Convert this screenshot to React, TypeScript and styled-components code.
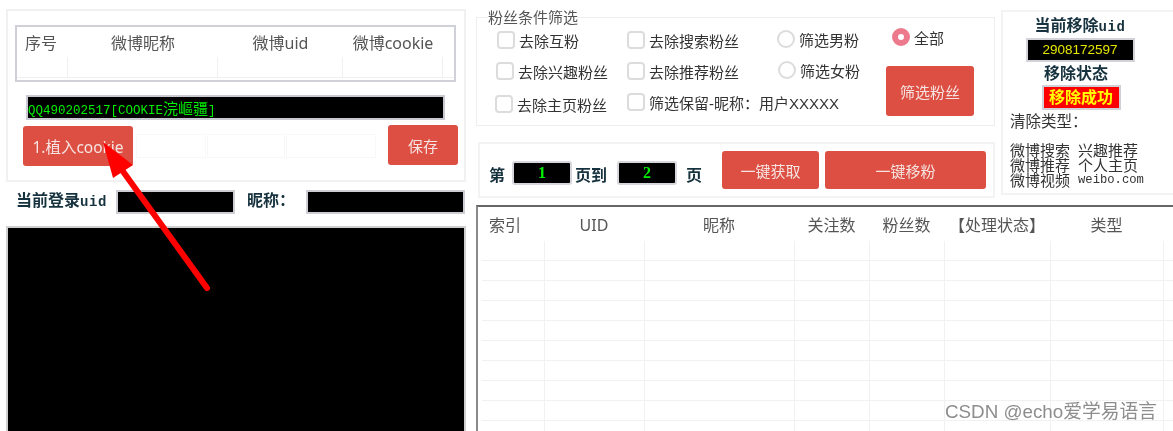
import React from "react";
import styled, { createGlobalStyle } from "styled-components";

const Global = createGlobalStyle`
  html, body { margin: 0; padding: 0; background: #fff; overflow: hidden; }
  * { box-sizing: border-box; }
`;

const SANS = `"Noto Sans", "Noto Sans CJK SC", sans-serif`;
const RED = "#dc4f42";

const Page = styled.div`
  position: relative;
  width: 1173px;
  height: 431px;
  overflow: hidden;
  display: flex;
  font-family: ${SANS};
  filter: blur(0.35px);
`;

const LeftCol = styled.div`
  width: 476px;
  padding: 9px 0 0 6px;
  display: flex;
  flex-direction: column;
`;

const RightCol = styled.div`
  width: 697px;
  display: flex;
  flex-direction: column;
`;

const CookiePanel = styled.div`
  width: 460px;
  height: 173px;
  border: 2px solid #f1f1f1;
  display: flex;
  flex-direction: column;
  padding: 14px 0 0 7px;
`;

const AccountTable = styled.div`
  width: 441px;
  height: 57px;
  border: 2px solid #d0d0d8;
  display: flex;
  flex-direction: column;
`;

const AccountHead = styled.div`
  height: 30px;
  display: grid;
  grid-template-columns: 51px 150px 125px 100px;
  align-items: center;
`;

const AccountHeadCell = styled.div<{ $left?: boolean }>`
  font-size: 16px;
  line-height: 32px;
  color: #555;
  white-space: nowrap;
  text-align: ${(p) => (p.$left ? "left" : "center")};
  padding-left: ${(p) => (p.$left ? "8px" : "0")};
`;

const AccountRow = styled.div`
  height: 21px;
  display: grid;
  grid-template-columns: 51px 150px 125px 100px;
  border-bottom: 1px solid #f0f0f0;
`;

const GhostCell = styled.div`
  border-right: 1px solid #f0f0f0;
`;

const CookieInput = styled.div`
  width: 419px;
  height: 25px;
  margin: 13px 0 0 11px;
  border: 2px solid #c9c9d1;
  background: #000;
  color: #00f000;
  font-family: "Liberation Mono", monospace;
  font-size: 12.5px;
  line-height: 21px;
  white-space: nowrap;
  display: flex;
`;

const Cjk = styled.span`
  font-family: "Noto Sans CJK SC", sans-serif;
  font-size: 15px;
`;

const CookieActions = styled.div`
  display: flex;
  align-items: flex-start;
  margin-top: 5px;
  margin-left: 8px;
`;

const RedButton = styled.div<{ $w: number; $h: number; $size?: number; $mt?: number }>`
  width: ${(p) => p.$w}px;
  height: ${(p) => p.$h}px;
  flex: none;
  margin-top: ${(p) => p.$mt ?? 0}px;
  background: ${RED};
  color: #f6e4e2;
  border-radius: 3px;
  font-size: ${(p) => p.$size ?? 15}px;
  display: flex;
  align-items: center;
  justify-content: center;
  white-space: nowrap;
`;

const GhostRow = styled.div`
  display: flex;
  margin: 9px 11px 0 3px;
  height: 24px;
`;

const GhostBox = styled.div<{ $w: number }>`
  width: ${(p) => p.$w}px;
  border: 1px solid #f8f8f8;
  margin-right: 1px;
`;

const LoginRow = styled.div`
  height: 42px;
  display: flex;
  align-items: flex-start;
  padding-top: 8px;
  width: 460px;
`;

const BoldLabel = styled.div<{ $ml?: number; $mr?: number }>`
  font-weight: 700;
  font-size: 16px;
  color: #17323f;
  white-space: nowrap;
  margin-left: ${(p) => p.$ml ?? 0}px;
  margin-right: ${(p) => p.$mr ?? 0}px;
  line-height: 20px;
`;

const PageLabel = styled(BoldLabel)`
  padding-top: 4px;
`;

const MonoBold = styled.span`
  font-family: "Liberation Mono", monospace;
  font-size: 14px;
  letter-spacing: 0.6px;
`;

const DarkField = styled.div<{ $w: number }>`
  width: ${(p) => p.$w}px;
  height: 24px;
  flex: none;
  background: #000;
  border: 2px solid #cdcdd4;
`;

const LogConsole = styled.div`
  width: 460px;
  margin-top: 2px;
  flex: 1;
  background: #000;
  border: 2px solid #cfcfcf;
  border-bottom: none;
`;

const TopArea = styled.div`
  height: 205px;
  display: flex;
  align-items: flex-start;
`;

const FilterCol = styled.div`
  width: 519px;
  padding-top: 9px;
  display: flex;
  flex-direction: column;
`;

const FilterSet = styled.fieldset`
  margin: 0;
  padding: 0 0 0 18px;
  width: 519px;
  height: 117px;
  border: 1px solid #eeeeee;
  display: grid;
  grid-template-columns: 132px 150px 109px 100px;
  align-content: start;
`;

const FilterLegend = styled.legend`
  margin-left: -7px;
  padding: 0;
  font-size: 15px;
  line-height: 16px;
  color: #555;
`;

const FilterColumn = styled.div`
  display: flex;
  flex-direction: column;
`;

const Option = styled.label<{ $mt: number; $ml?: number }>`
  display: flex;
  align-items: center;
  gap: 4px;
  height: 20px;
  margin-top: ${(p) => p.$mt}px;
  margin-left: ${(p) => p.$ml ?? 0}px;
  font-size: 15px;
  color: #333;
  white-space: nowrap;
`;

const WideLatinOption = styled(Option)`
  font-family: "Liberation Sans", "Noto Sans CJK SC", sans-serif;
`;

const CheckBox = styled.span`
  width: 18px;
  height: 18px;
  flex: none;
  border: 2px solid #dcdcdc;
  border-radius: 4px;
  background: #fff;
`;

const Radio = styled.span<{ $on?: boolean }>`
  width: 18px;
  height: 18px;
  flex: none;
  border-radius: 50%;
  border: ${(p) => (p.$on ? "6px solid #ec7a8c" : "2px solid #dcdcdc")};
  background: #fff;
`;

const FilterButtonWrap = styled.div`
  margin-top: 19px;
`;

const PagePanel = styled.div`
  width: 517px;
  height: 56px;
  margin: 16px 0 0 2px;
  border: 2px solid #f3f3f3;
  display: flex;
  align-items: center;
`;

const PageControls = styled.div`
  display: flex;
  align-items: center;
  padding-left: 9px;
  margin-top: 6px;
`;

const PageField = styled.div<{ $ml: number; $mr: number }>`
  width: 60px;
  height: 24px;
  margin: 0 ${(p) => p.$mr}px 0 ${(p) => p.$ml}px;
  background: #000;
  border: 2px solid #d6d6dc;
  border-radius: 3px;
  color: #00f000;
  font-family: "Liberation Serif", serif;
  font-weight: 700;
  font-size: 16px;
  line-height: 20px;
  text-align: center;
`;

const PageButtons = styled.div`
  display: flex;
  gap: 6px;
  margin-left: 20px;
`;

const StatusPanel = styled.div`
  width: 172px;
  height: 185px;
  margin: 10px 0 0 6px;
  border: 2px solid #f3f3f3;
  border-right: none;
  display: flex;
  flex-direction: column;
  align-items: center;
  padding: 3px 16px 0 0;
`;

const UidBox = styled.div`
  width: 109px;
  height: 24px;
  margin-top: 1px;
  background: #000;
  border: 2px solid #d2d2d8;
  color: #e6e600;
  font-family: "Liberation Sans", sans-serif;
  font-size: 13.5px;
  line-height: 20px;
  text-align: center;
`;

const StatusLabel = styled(BoldLabel)`
  margin-top: 1px;
  margin-right: 8px;
`;

const StatusBadge = styled.div`
  width: 79px;
  height: 25px;
  margin: 2px 0 0 2px;
  background: #ff0000;
  border: 2px solid #d0d0d6;
  color: #ffff00;
  font-weight: 700;
  font-size: 16px;
  line-height: 20px;
  text-align: center;
  white-space: nowrap;
`;

const TypesTitle = styled.div`
  align-self: flex-start;
  margin: 1px 0 0 7px;
  font-size: 15.5px;
  line-height: 20px;
  color: #333;
  white-space: nowrap;
`;

const TypesGrid = styled.div`
  align-self: flex-start;
  margin: 12px 0 0 7px;
  display: grid;
  grid-template-columns: 68px auto;
  grid-auto-rows: 15px;
  font-size: 15px;
  line-height: 15px;
  color: #333;
  white-space: nowrap;
`;

const SpacedMono = styled.span`
  font-family: "Liberation Mono", monospace;
  font-size: 12.2px;
`;

const FansTable = styled.div`
  flex: 1;
  border-top: 2px solid #666;
  border-left: 2px solid #8a8a8a;
  padding-left: 4px;
  overflow: hidden;
`;

const columns = "63px 100px 150px 75px 75px 106px 113px";

const FansHead = styled.div`
  height: 34px;
  display: grid;
  grid-template-columns: ${columns};
`;

const FansHeadCell = styled.div<{ $left?: boolean }>`
  font-size: 16px;
  line-height: 37px;
  color: #555;
  white-space: nowrap;
  text-align: ${(p) => (p.$left ? "left" : "center")};
  padding: ${(p) => (p.$left ? "0 0 0 7px" : "0 2px 0 0")};
`;

const FansRow = styled.div`
  height: 20px;
  display: grid;
  grid-template-columns: ${columns};
  border-bottom: 1px solid #f1f1f1;
`;

const FansCell = styled.div`
  border-right: 1px solid #f1f1f1;
`;

const Watermark = styled.div`
  position: absolute;
  left: 945px;
  top: 399px;
  font-family: "Liberation Sans", "Noto Sans CJK SC", sans-serif;
  font-size: 18.8px;
  line-height: 26px;
  color: #8d8d8d;
  white-space: nowrap;
`;

const ArrowOverlay = styled.svg`
  position: absolute;
  left: 0;
  top: 0;
  pointer-events: none;
`;

const fanHeaders = ["索引", "UID", "昵称", "关注数", "粉丝数", "【处理状态】", "类型"];
const rows = Array.from({ length: 10 }, (_, i) => i);

export default function App() {
  return (
    <>
      <Global />
      <Page>
        <LeftCol>
          <CookiePanel>
            <AccountTable>
              <AccountHead>
                <AccountHeadCell $left>序号</AccountHeadCell>
                <AccountHeadCell>微博昵称</AccountHeadCell>
                <AccountHeadCell>微博uid</AccountHeadCell>
                <AccountHeadCell>微博cookie</AccountHeadCell>
              </AccountHead>
              <AccountRow>
                <GhostCell />
                <GhostCell />
                <GhostCell />
                <GhostCell />
              </AccountRow>
            </AccountTable>
            <CookieInput>
              <span>
                QQ490202517[COOKIE<Cjk>浣嶇疆</Cjk>]
              </span>
            </CookieInput>
            <CookieActions>
              <RedButton $w={110} $h={40} $size={15.5} $mt={1}>
                1.植入cookie
              </RedButton>
              <GhostRow>
                <GhostBox $w={70} />
                <GhostBox $w={78} />
                <GhostBox $w={90} />
              </GhostRow>
              <RedButton $w={70} $h={40} $size={15}>
                保存
              </RedButton>
            </CookieActions>
          </CookiePanel>
          <LoginRow>
            <BoldLabel $ml={10} $mr={9}>
              当前登录<MonoBold>uid</MonoBold>
            </BoldLabel>
            <DarkField $w={119} />
            <BoldLabel $ml={12} $mr={11}>
              昵称：
            </BoldLabel>
            <DarkField $w={159} />
          </LoginRow>
          <LogConsole />
        </LeftCol>
        <RightCol>
          <TopArea>
            <FilterCol>
              <FilterSet>
                <FilterLegend>粉丝条件筛选</FilterLegend>
                <FilterColumn>
                  <Option $mt={5} $ml={2}>
                    <CheckBox />
                    去除互粉
                  </Option>
                  <Option $mt={11} $ml={1}>
                    <CheckBox />
                    去除兴趣粉丝
                  </Option>
                  <Option $mt={13}>
                    <CheckBox />
                    去除主页粉丝
                  </Option>
                </FilterColumn>
                <FilterColumn>
                  <Option $mt={5}>
                    <CheckBox />
                    去除搜索粉丝
                  </Option>
                  <Option $mt={11}>
                    <CheckBox />
                    去除推荐粉丝
                  </Option>
                  <WideLatinOption $mt={11}>
                    <CheckBox />
                    筛选保留-昵称：用户XXXXX
                  </WideLatinOption>
                </FilterColumn>
                <FilterColumn>
                  <Option $mt={4}>
                    <Radio />
                    筛选男粉
                  </Option>
                  <Option $mt={11} $ml={1}>
                    <Radio />
                    筛选女粉
                  </Option>
                </FilterColumn>
                <FilterColumn>
                  <Option $mt={2} $ml={6}>
                    <Radio $on />
                    全部
                  </Option>
                  <FilterButtonWrap>
                    <RedButton $w={88} $h={50}>
                      筛选粉丝
                    </RedButton>
                  </FilterButtonWrap>
                </FilterColumn>
              </FilterSet>
              <PagePanel>
                <PageControls>
                  <PageLabel>第</PageLabel>
                  <PageField $ml={7} $mr={3}>
                    1
                  </PageField>
                  <PageLabel>页到</PageLabel>
                  <PageField $ml={10} $mr={9}>
                    2
                  </PageField>
                  <PageLabel>页</PageLabel>
                </PageControls>
                <PageButtons>
                  <RedButton $w={97} $h={38}>
                    一键获取
                  </RedButton>
                  <RedButton $w={161} $h={38}>
                    一键移粉
                  </RedButton>
                </PageButtons>
              </PagePanel>
            </FilterCol>
            <StatusPanel>
              <BoldLabel>
                当前移除<MonoBold>uid</MonoBold>
              </BoldLabel>
              <UidBox>2908172597</UidBox>
              <StatusLabel>移除状态</StatusLabel>
              <StatusBadge>移除成功</StatusBadge>
              <TypesTitle>清除类型：</TypesTitle>
              <TypesGrid>
                <span>微博搜索</span>
                <span>兴趣推荐</span>
                <span>微博推荐</span>
                <span>个人主页</span>
                <span>微博视频</span>
                <SpacedMono>weibo.com</SpacedMono>
              </TypesGrid>
            </StatusPanel>
          </TopArea>
          <FansTable>
            <FansHead>
              {fanHeaders.map((h, i) => (
                <FansHeadCell key={h} $left={i === 0}>
                  {h}
                </FansHeadCell>
              ))}
            </FansHead>
            {rows.map((r) => (
              <FansRow key={r}>
                {fanHeaders.map((h) => (
                  <FansCell key={h} />
                ))}
              </FansRow>
            ))}
          </FansTable>
        </RightCol>
        <Watermark>CSDN @echo爱学易语言</Watermark>
        <ArrowOverlay width="1173" height="431" viewBox="0 0 1173 431">
          <line x1="122" y1="170" x2="207" y2="288" stroke="#ff0000" strokeWidth="6" strokeLinecap="round" />
          <polygon points="103,142 113,178 133,165" fill="#ff0000" />
        </ArrowOverlay>
      </Page>
    </>
  );
}
